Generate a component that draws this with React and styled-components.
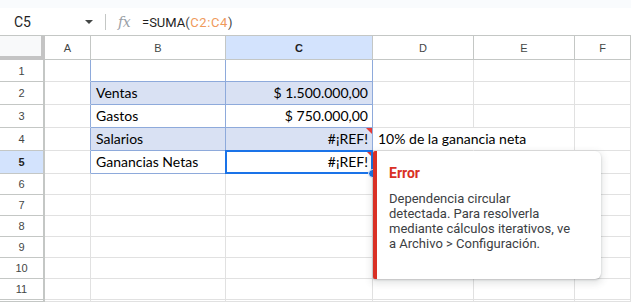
import React from 'react'
import styled, { createGlobalStyle } from 'styled-components'

const Global = createGlobalStyle`
  body {
    margin: 0;
    background: #ffffff;
    overflow: hidden;
    font-family: Roboto, "Liberation Sans", Arial, sans-serif;
  }
`

const TABLE_BORDER = '#8eaadb'
const GRID = '#e1e1e1'
const HEAD_LINE = '#c4c7c5'
const BAND = '#d9e1f3'

const Page = styled.div`
  width: 631px;
  height: 303px;
  overflow: hidden;
`

const TopStrip = styled.div`
  height: 8px;
  background: #f9fbfd;
`

const FormulaBar = styled.div`
  height: 28px;
  box-sizing: border-box;
  display: flex;
  align-items: center;
  background: #fff;
`

const NameBox = styled.div`
  width: 105px;
  box-sizing: border-box;
  padding: 0 12px 0 14px;
  display: flex;
  align-items: center;
  justify-content: space-between;
  font-size: 14px;
  color: #1f1f1f;
`

const Caret = styled.span`
  width: 0;
  height: 0;
  border-left: 4px solid transparent;
  border-right: 4px solid transparent;
  border-top: 4px solid #444746;
`

const Divider = styled.span`
  width: 1px;
  height: 16px;
  background: ${HEAD_LINE};
`

const Fx = styled.span`
  margin-left: 12px;
  width: 24px;
  font-family: "DejaVu Serif", "Liberation Serif", serif;
  font-style: italic;
  font-size: 14px;
  color: #9aa0a6;
  letter-spacing: -0.5px;
`

const Formula = styled.span`
  font-size: 13px;
  color: #1f1f1f;
  white-space: pre;
`

const Paren = styled.span`
  letter-spacing: 0.6px;
  color: #444746;
`

const Range = styled.span`
  letter-spacing: 0.6px;
  color: #ef9a5c;
`

const Sheet = styled.div`
  position: relative;
  display: grid;
  grid-template-columns: 45px 46px 135px 147px 101px 101px 1fr;
  grid-template-rows: 24px 22px 23px 23px 23px 23px repeat(6, 21px) 1fr;
  border-top: 1px solid ${HEAD_LINE};
  margin-top: -1px;
`

const Corner = styled.div`
  background: #f8f9fa;
  border-right: 4px solid #c4c4c4;
  border-bottom: 4px solid #c4c4c4;
`

const ColHead = styled.div`
  display: flex;
  align-items: center;
  justify-content: center;
  font-family: "Liberation Sans", Arial, sans-serif;
  font-size: 11px;
  color: ${p => (p.$active ? '#1f1f1f' : '#444746')};
  font-weight: ${p => (p.$active ? 700 : 400)};
  background: ${p => (p.$active ? '#d3e3fd' : '#fff')};
  border-right: 1px solid ${HEAD_LINE};
  border-bottom: 1px solid ${HEAD_LINE};
  box-sizing: border-box;
`

const RowHead = styled(ColHead)`
  border-right: 2px solid ${HEAD_LINE};
`

const Cell = styled.div`
  position: relative;
  box-sizing: border-box;
  display: flex;
  align-items: center;
  justify-content: ${p => (p.$align === 'right' ? 'flex-end' : 'flex-start')};
  padding: 0 4px 1px 5px;
  white-space: nowrap;
  overflow: visible;
  font-family: Lato, "Open Sans", sans-serif;
  font-size: 14px;
  color: #000;
  background: ${p => p.$fill || 'transparent'};
  border-right: 1px solid ${p => p.$right || GRID};
  border-bottom: 1px solid ${p => p.$bottom || GRID};
  z-index: ${p => (p.$over ? 1 : 0)};
`

const Selection = styled.span`
  position: absolute;
  left: -1px;
  top: -1px;
  right: -1px;
  bottom: -1px;
  border: 2px solid #1a73e8;
  pointer-events: none;
`

const Handle = styled.span`
  position: absolute;
  right: -5px;
  bottom: -5px;
  width: 7px;
  height: 7px;
  border-radius: 50%;
  background: #1a73e8;
  border: 1px solid #fff;
`

const ErrorMark = styled.span`
  position: absolute;
  top: 0;
  right: 0;
  width: 0;
  height: 0;
  border-top: 6px solid #e53935;
  border-left: 6px solid transparent;
`

const Popup = styled.div`
  position: absolute;
  left: 373px;
  top: 115px;
  width: 228px;
  height: 128px;
  box-sizing: border-box;
  background: #fff;
  border-left: 4px solid #d93025;
  border-radius: 2px 6px 6px 2px;
  box-shadow: 0 1px 2px rgba(60, 64, 67, 0.25), 0 3px 7px 2px rgba(60, 64, 67, 0.12);
  padding: 13px 0 0 12px;
  z-index: 3;
`

const PopupTitle = styled.div`
  font-family: Roboto, sans-serif;
  font-size: 14px;
  font-weight: 700;
  color: #d93025;
  line-height: 18px;
`

const PopupBody = styled.div`
  margin-top: 9px;
  font-family: Roboto, sans-serif;
  font-size: 13px;
  color: #3c4043;
  line-height: 15px;
  white-space: nowrap;
`

const columns = ['A', 'B', 'C', 'D', 'E', 'F']

const rows = [
  { n: 1, b: '', c: '', d: '' },
  { n: 2, b: 'Ventas', c: '$ 1.500.000,00', d: '', fill: BAND },
  { n: 3, b: 'Gastos', c: '$ 750.000,00', d: '' },
  { n: 4, b: 'Salarios', c: '#¡REF!', d: '10% de la ganancia neta', fill: BAND, err: true },
  { n: 5, b: 'Ganancias Netas', c: '#¡REF!', d: '', err: true, selected: true },
  ...[6, 7, 8, 9, 10, 11].map(n => ({ n, b: '', c: '', d: '' })),
  { n: 12, hideLabel: true, b: '', c: '', d: '' }
]

const message = [
  'Dependencia circular',
  'detectada. Para resolverla',
  'mediante cálculos iterativos, ve',
  'a Archivo > Configuración.'
]

const App = () => {
  return (
    <Page>
      <Global />
      <TopStrip />
      <FormulaBar>
        <NameBox>
          <span>C5</span>
          <Caret />
        </NameBox>
        <Divider />
        <Fx>fx</Fx>
        <Formula>
          =SUMA<Paren>(</Paren><Range>C2:C4</Range><Paren>)</Paren>
        </Formula>
      </FormulaBar>
      <Sheet>
        <Corner />
        {columns.map(c => (
          <ColHead key={c} $active={c === 'C'}>{c}</ColHead>
        ))}
        {rows.map(r => {
          const inTable = r.n <= 5
          return (
            <React.Fragment key={r.n}>
              <RowHead $active={r.selected}>{r.hideLabel ? '' : r.n}</RowHead>
              <Cell $right={inTable ? TABLE_BORDER : undefined} />
              <Cell
                $fill={r.fill}
                $right={inTable ? TABLE_BORDER : undefined}
                $bottom={inTable ? TABLE_BORDER : undefined}
              >
                {r.b}
              </Cell>
              <Cell
                $align="right"
                $fill={r.fill}
                $right={inTable ? TABLE_BORDER : undefined}
                $bottom={inTable ? TABLE_BORDER : undefined}
                $over={r.selected}
              >
                {r.c}
                {r.err && <ErrorMark />}
                {r.selected && (
                  <>
                    <Selection />
                    <Handle />
                  </>
                )}
              </Cell>
              <Cell $right={r.d ? 'transparent' : undefined} $over={!!r.d}>
                {r.d}
              </Cell>
              <Cell />
              <Cell />
            </React.Fragment>
          )
        })}
        <Popup>
          <PopupTitle>Error</PopupTitle>
          <PopupBody>
            {message.map((line, i) => (
              <div key={i}>{line}</div>
            ))}
          </PopupBody>
        </Popup>
      </Sheet>
    </Page>
  )
}

export default App
